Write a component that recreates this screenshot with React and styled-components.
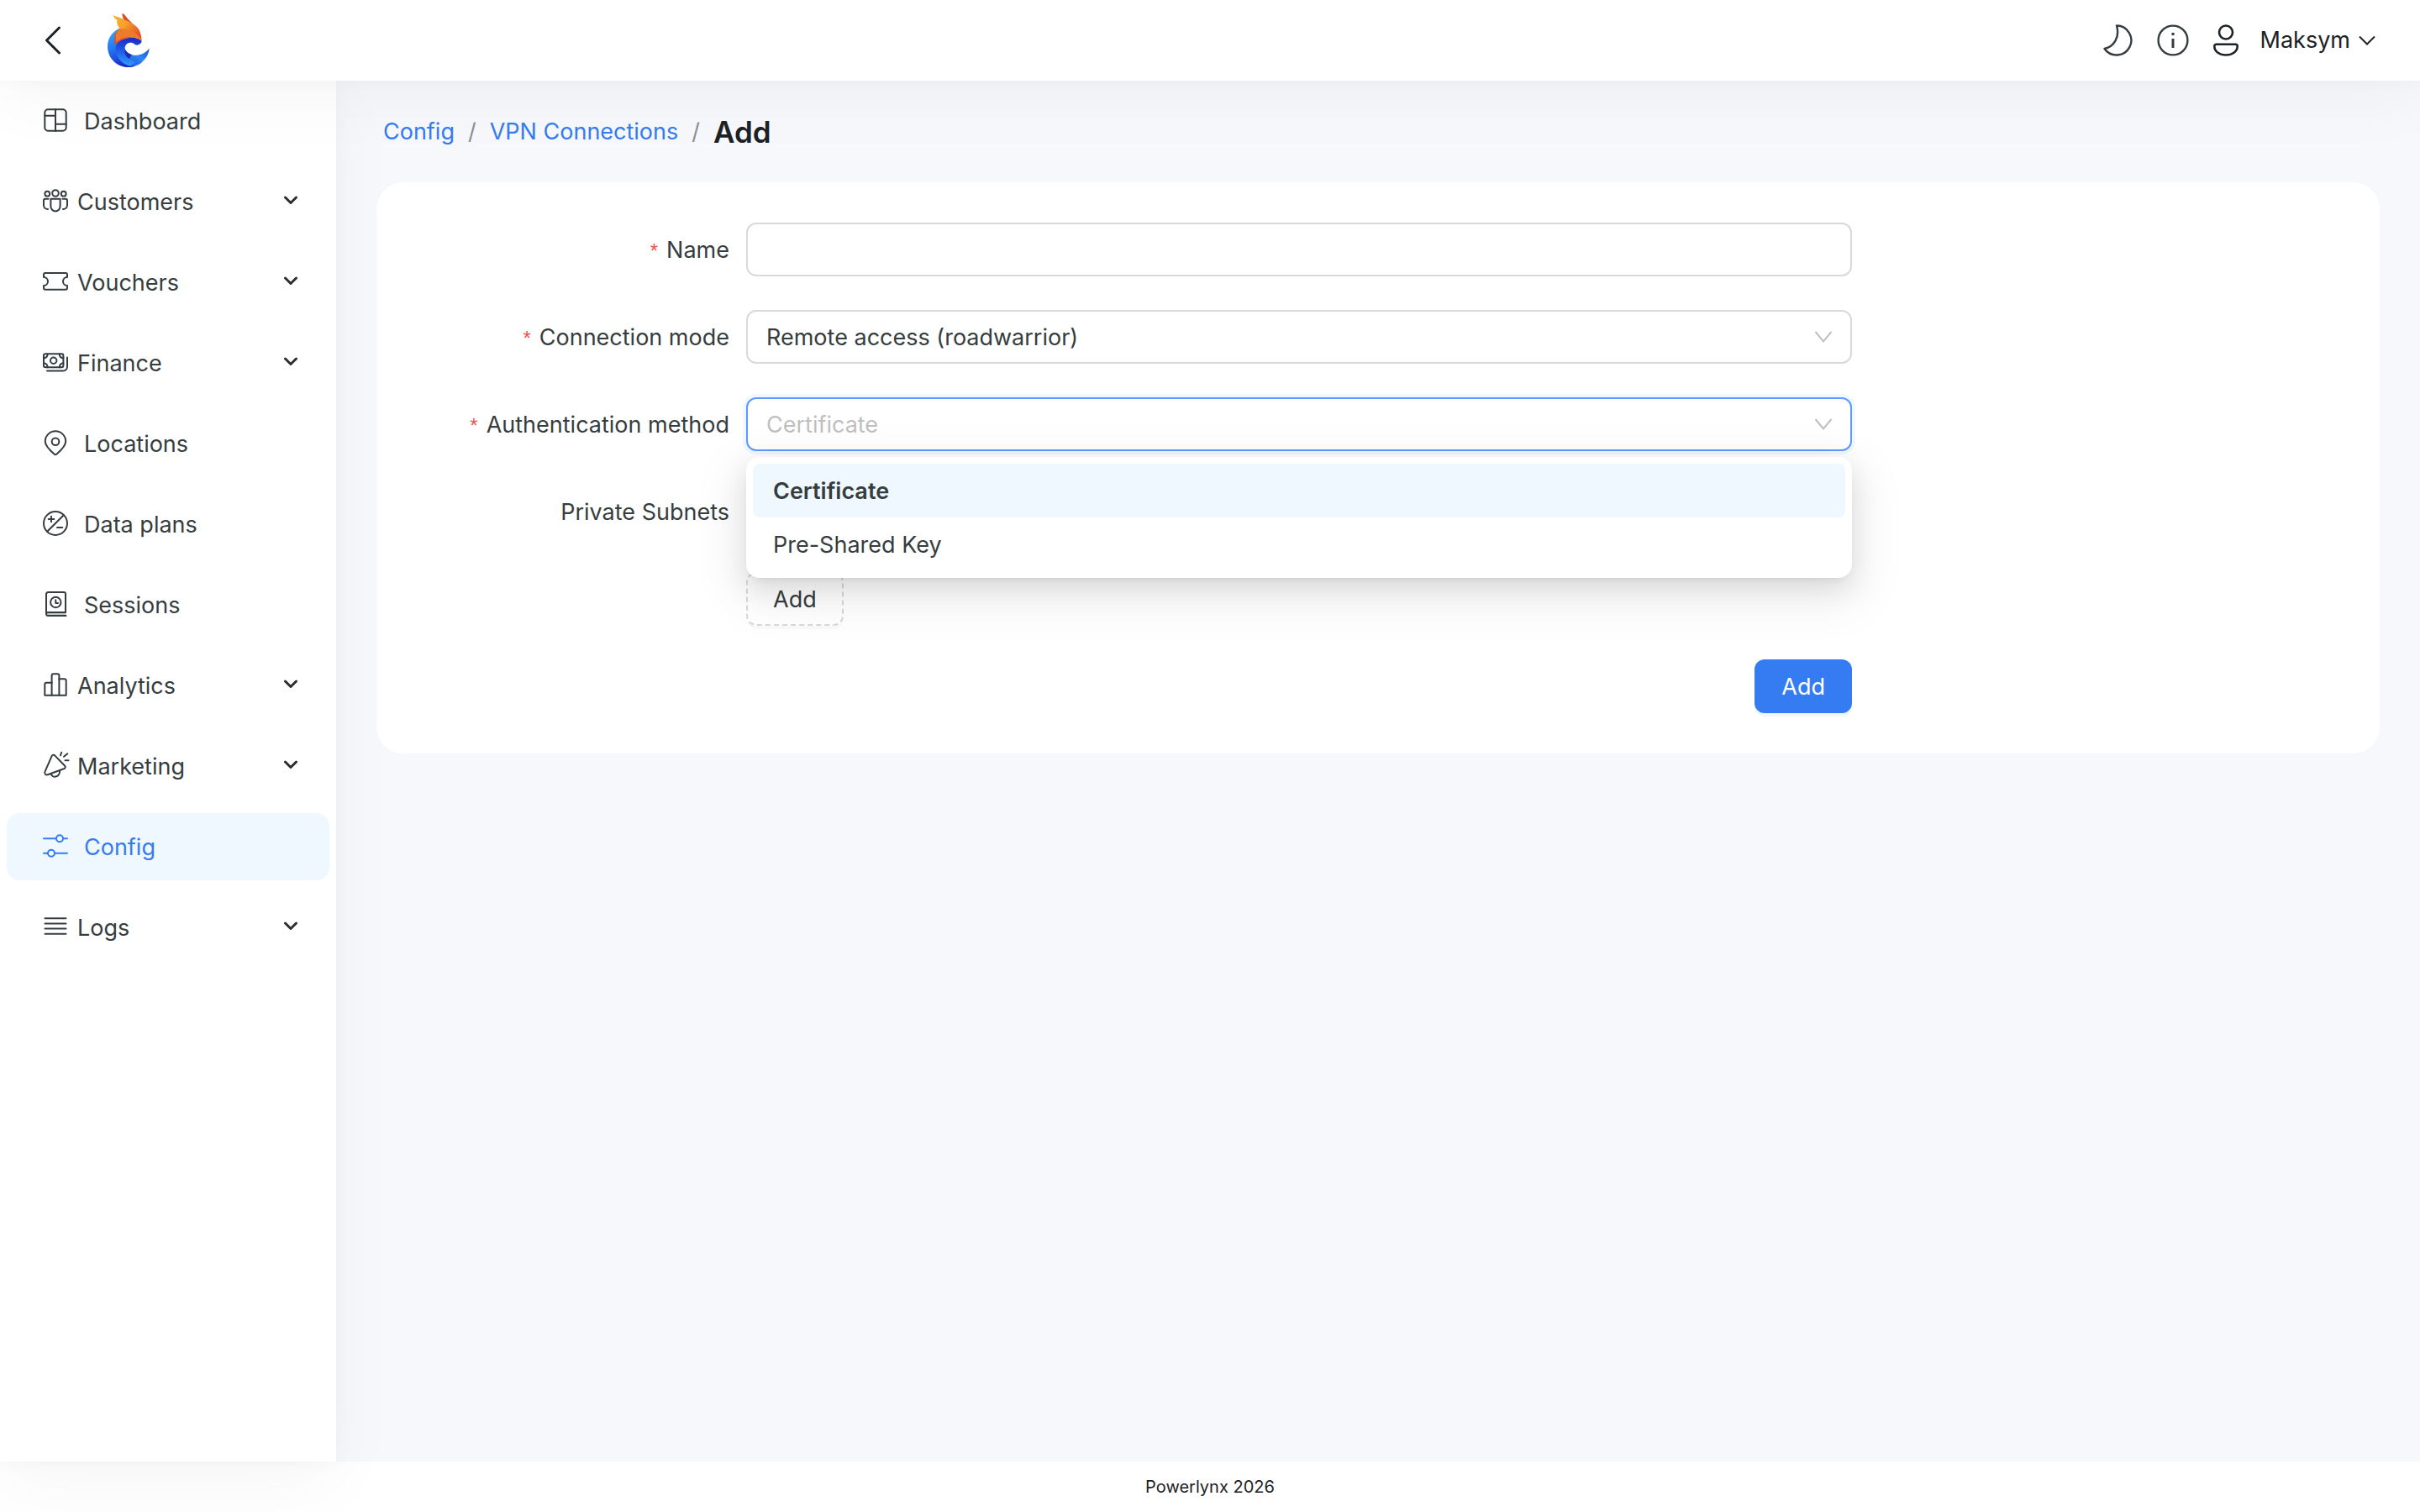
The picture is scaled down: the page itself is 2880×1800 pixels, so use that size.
import React, { useState } from 'react';
import styled, { createGlobalStyle, css } from 'styled-components';

const GlobalStyle = createGlobalStyle`
  * {
    box-sizing: border-box;
  }
  body {
    margin: 0;
    font-family: Inter, "Liberation Sans", sans-serif;
    font-size: 27px;
    line-height: 44px;
    color: #363d40;
    background: #ffffff;
  }
  button, input, select {
    font: inherit;
    color: inherit;
  }
`

const panelShadow = '0 0 20px rgba(0, 0, 0, 0.03), 0 24px 80px rgba(0, 0, 0, 0.04)'

const Page = styled.div`
  display: flex;
  flex-direction: column;
  min-height: 100vh;
`
const Header = styled.header`
  position: relative;
  z-index: 2;
  display: flex;
  align-items: center;
  justify-content: space-between;
  height: 96px;
  padding: 0 52px 0 50px;
  background: #ffffff;
  box-shadow: ${panelShadow};
`
const HeaderGroup = styled.div`
  display: flex;
  align-items: center;
  gap: ${props => props.$gap}px;
`
const IconButton = styled.button`
  display: flex;
  align-items: center;
  padding: 0;
  border: 0;
  background: none;
  color: ${props => props.$dark ? '#1d2226' : '#363d40'};
`
const UserButton = styled(IconButton)`
  gap: 9px;
`
const UserIcon = styled.svg`
  margin-right: 16px;
`
const Body = styled.div`
  display: flex;
  flex: 1;
`
const Sidebar = styled.nav`
  position: relative;
  z-index: 1;
  flex: 0 0 400px;
  background: #ffffff;
  box-shadow: ${panelShadow};
`
const Menu = styled.ul`
  margin: 0;
  padding: 0;
  list-style: none;
`
const itemStyle = css`
  display: flex;
  align-items: center;
  width: 384px;
  height: 80px;
  margin: 8px;
  padding: 2px 38px 0 43px;
  border: 0;
  border-radius: 16px;
  text-align: left;
  text-decoration: none;
`
const MenuLink = styled.a`
  ${itemStyle}
  gap: 19px;
  color: ${props => props.$active ? '#357cf3' : '#363d40'};
  background: ${props => props.$active ? '#eff7ff' : 'none'};
`
const MenuButton = styled.button`
  ${itemStyle}
  gap: 11px;
  background: none;
`
const MenuRow = styled.li`
  display: flow-root;
  height: 96px;
`
const MenuText = styled.span`
  flex: 1;
`
const MenuIcon = styled.svg`
  flex: none;
  width: 30px;
  height: 34px;
  padding-bottom: 4px;
  overflow: visible;
`
const Content = styled.main`
  flex: 1;
  min-width: 0;
  padding: 0 48px;
  background: #f6f8fc;
`
const Breadcrumb = styled.nav`
  display: flex;
  align-items: center;
  gap: 16px;
  padding: 37px 8px 36px;
  line-height: 48px;
`
const CrumbLink = styled.a`
  color: #357cf3;
  text-decoration: none;
`
const CrumbSeparator = styled.span`
  color: #8d8f93;
`
const CrumbTitle = styled.h1`
  margin: 0;
  font-size: 35px;
  font-weight: 600;
  color: #1d2226;
`
const Card = styled.form`
  display: flex;
  flex-direction: column;
  gap: 40px;
  padding: 48px;
  border-radius: 32px;
  background: #ffffff;
`
const FormRow = styled.div`
  display: grid;
  grid-template-columns: 98fr 329fr 145fr;
  align-items: center;
`
const Label = styled.label`
  padding: 2px 20px 0 0;
  text-align: right;
`
const Required = styled.span`
  margin-right: 10px;
  font-family: "Liberation Sans", sans-serif;
  font-size: 24px;
  color: #ef5350;
`
const Control = styled.div`
  position: relative;
  grid-column: 2;
  display: flex;
  justify-content: ${props => props.$end ? 'flex-end' : 'flex-start'};
`
const fieldStyle = css`
  width: 100%;
  height: 64px;
  padding: 2px 22px 0;
  border: 2px solid #d9d9d9;
  border-radius: 12px;
  outline: none;
  background: #ffffff;
`
const Input = styled.input`
  ${fieldStyle}
`
const Select = styled.select`
  ${fieldStyle}
  appearance: none;
  ${props => props.$open && css`
    border-color: #5b9bff;
    box-shadow: 0 0 0 4px #eff7ff;
    color: #bfbfbf;
  `}
`
const SelectArrow = styled.svg`
  position: absolute;
  top: 20px;
  right: 22px;
  pointer-events: none;
`
const Dropdown = styled.ul`
  position: absolute;
  z-index: 1;
  top: 100%;
  left: 0;
  right: 0;
  margin: 7px 0 0;
  padding: 8px;
  border-radius: 16px;
  list-style: none;
  background: #ffffff;
  box-shadow:
    0 12px 32px rgba(0, 0, 0, 0.1),
    0 6px 12px -8px rgba(0, 0, 0, 0.14),
    0 18px 56px 16px rgba(0, 0, 0, 0.06);
`
const Option = styled.li`
  padding: 2px 24px 0;
  border-radius: 8px;
  line-height: 62px;
  font-weight: ${props => props.$selected ? 600 : 400};
  background: ${props => props.$selected ? '#eff7ff' : 'none'};
`
const Button = styled.button`
  height: 64px;
  padding: 2px 30px 0;
  border: 2px solid #357cf3;
  border-radius: 12px;
  color: #ffffff;
  background: #357cf3;
  box-shadow: 0 4px 0 #eff7ff;
`
const DashedButton = styled(Button)`
  border: 2px dashed #d9d9d9;
  color: #363d40;
  background: #ffffff;
  box-shadow: 0 4px 0 rgba(0, 0, 0, 0.02);
`
const Footer = styled.footer`
  font-size: 20px;
  line-height: 60px;
  text-align: center;
  color: #1d2226;
`

const icons = {
  dashboard: (
    <>
      <rect x="2.3" y="2.3" width="25.4" height="25.4" rx="4" />
      <path d="M15 2.3v25.4M2.3 9.7H15M15 19.7h12.7" />
    </>
  ),
  customers: (
    <>
      <circle cx="15" cy="6" r="3.8" />
      <circle cx="5.3" cy="6.7" r="2.9" />
      <circle cx="24.7" cy="6.7" r="2.9" />
      <path d="M9.4 12.8h11.2v9a5.6 5.6 0 0 1-11.2 0z" />
      <path d="M6.6 12.7H3a2 2 0 0 0-2 2v5.8a4.8 4.8 0 0 0 5 4.5M23.4 12.7H27a2 2 0 0 1 2 2v5.8a4.8 4.8 0 0 1-5 4.5" />
    </>
  ),
  vouchers: (
    <path d="M1 7a2 2 0 0 1 2-2h24a2 2 0 0 1 2 2v3a5 5 0 0 0 0 10v2.700a2 2 0 0 1-2 2H3a2 2 0 0 1-2-2V20a5 5 0 0 0 0-10z" />
  ),
  finance: (
    <>
      <rect x="1" y="5.300" width="23.400" height="16" rx="2" />
      <circle cx="12.700" cy="13.300" r="3.700" />
      <path d="M1 10.500a4.500 4.500 0 0 0 4.500-5M24.400 10.500a4.500 4.500 0 0 1-4.500-5M1 16.300a4.500 4.500 0 0 1 4.500 5M24.400 16.300a4.500 4.500 0 0 0-4.500 5" />
      <path d="M29 9.500v11a5 5 0 0 1-5 5H5" />
    </>
  ),
  locations: (
    <>
      <path d="M27.200 13.500c0 6-6.700 11.500-10.800 15a2 2 0 0 1-2.800 0C9.500 25 2.800 19.500 2.800 13.500a12.200 12.200 0 0 1 24.400 0z" />
      <circle cx="15" cy="13.700" r="4.300" />
    </>
  ),
  plans: (
    <>
      <circle cx="15" cy="15" r="14" />
      <path d="M5.200 24.800L24.800 5.200M6.700 10h6.600M10 6.700v6.600M17 20h6.300" />
    </>
  ),
  sessions: (
    <>
      <path d="M4 25h23.500v4H6z" fill="#c4c6c7" stroke="none" />
      <path d="M27.500 29H6.500A2.500 2.500 0 0 1 4 26.500V3.500A2.500 2.500 0 0 1 6.500 1H25a2 2 0 0 1 2 2v22H6a2 2 0 0 0-2 2" />
      <circle cx="15.300" cy="13" r="6.200" />
      <path d="M15.300 10.300V14H18" />
    </>
  ),
  analytics: (
    <>
      <path d="M10.600 12.700H4.300a2 2 0 0 0-2 2v13h8.300M19.400 8.300h6.300a2 2 0 0 1 2 2v17.400h-8.300" />
      <path d="M10.600 27.700V4.300a2 2 0 0 1 2-2h4.800a2 2 0 0 1 2 2v23.400z" />
    </>
  ),
  marketing: (
    <>
      <path d="M10.600 4.100a2.200 2.200 0 0 1 3.600-.7l12 12.400a2 2 0 0 1-.7 3.200L5.800 26.200a2.600 2.600 0 0 1-3.300-3.600z" />
      <path d="M9.700 25c.8 5.400 10.200 5.400 10.600-3.800M22.200-.2l-1.200 3.500M29.300 1.200L25 4.800M26.500 9.300h4" />
    </>
  ),
  config: (
    <>
      <path d="M1 6.300h15M24 6.300h5M1 23.700h5M14 23.700h15" />
      <circle cx="20" cy="6.300" r="4" />
      <circle cx="10" cy="23.700" r="4" />
    </>
  ),
  logs: <path d="M2.500 5.300h25M2.500 11.500h25M2.500 17.500h25M2.500 23.700h25" />,
}

const menu = [
  { text: 'Dashboard', icon: 'dashboard' },
  { text: 'Customers', icon: 'customers', group: true },
  { text: 'Vouchers', icon: 'vouchers', group: true },
  { text: 'Finance', icon: 'finance', group: true },
  { text: 'Locations', icon: 'locations' },
  { text: 'Data plans', icon: 'plans' },
  { text: 'Sessions', icon: 'sessions' },
  { text: 'Analytics', icon: 'analytics', group: true },
  { text: 'Marketing', icon: 'marketing', group: true },
  { text: 'Config', icon: 'config', active: true },
  { text: 'Logs', icon: 'logs', group: true },
]

const Icon = ({ name }) => (
  <MenuIcon viewBox="0 0 30 30" fill="none" stroke="currentColor" strokeWidth="2" strokeLinecap="round" strokeLinejoin="round" aria-hidden="true">
    {icons[name]}
  </MenuIcon>
)

const MenuChevron = () => (
  <svg width="16" height="18" viewBox="0 0 16 18" fill="none" stroke="#282f33" strokeWidth="3" strokeLinecap="round" strokeLinejoin="round" aria-hidden="true">
    <path d="M1.500 3L8 9.500L14.500 3" />
  </svg>
)

const Logo = () => (
  <svg width="50" height="64" viewBox="384 48 150 192" role="img" aria-label="Powerlynx">
    <defs>
      <linearGradient id="back" x1="0.200" y1="0" x2="0.500" y2="1">
        <stop offset="0" stopColor="#37a8fb" />
        <stop offset="0.500" stopColor="#2473ee" />
        <stop offset="1" stopColor="#1a22c8" />
      </linearGradient>
      <linearGradient id="wave" x1="0.600" y1="0" x2="0.500" y2="1">
        <stop offset="0" stopColor="#1b28c6" />
        <stop offset="0.450" stopColor="#1f55e6" />
        <stop offset="1" stopColor="#2f9dfa" />
      </linearGradient>
      <linearGradient id="tip" x1="1" y1="0" x2="0" y2="1">
        <stop offset="0" stopColor="#1d4fd8" />
        <stop offset="0.450" stopColor="#2f86f2" />
        <stop offset="1" stopColor="#1e4be0" />
      </linearGradient>
      <linearGradient id="ear" x1="0" y1="0" x2="1" y2="0.700">
        <stop offset="0" stopColor="#fdb52c" />
        <stop offset="0.450" stopColor="#f7a02b" />
        <stop offset="1" stopColor="#e2512c" />
      </linearGradient>
    </defs>
    <path fill="url(#back)" d="M430 100C400 112 384 138 384 166C384 208 417 240 458 240C476 240 494 233 506 223L484 206L446 190L440 140z" />
    <path fill="url(#wave)" d="M506 147C492 128 436 128 415 160C407 190 425 225 462 236C482 238 500 230 510 218L484 200C460 196 446 184 446 172C446 160 456 152 466 152C478 152 480 160 490 161C498 160 505 154 506 147z" />
    <path fill="url(#tip)" d="M533 172C531 206 505 234 462 236C480 229 488 222 470 214C455 206 450 200 447 180C456 194 474 199 490 197C508 196 524 186 533 172z" />
    <path fill="#1a2fae" d="M446 174C443 188 448 203 462 210L470 195C458 191 449 184 446 174z" />
    <path fill="#1a22c8" d="M418 226C436 236 455 238 484 235C468 242 437 243 418 226z" />
    <path fill="#dc4b2d" d="M428 102C410 112 403 135 413 161C425 143 455 132 480 135L470 110z" />
    <path fill="#ed7b2b" d="M429 102C414 112 409 130 416 150C436 130 480 126 506 146C506 134 502 118 495 106L470 98z" />
    <path fill="#df4a2c" d="M437 48C441 47 448 56 455 66L492 103L440 76C444 68 433 56 437 48z" />
    <path fill="url(#ear)" d="M405 53C412 60 430 61 441 69C460 76 488 90 496 106C501 116 504 130 505 143C496 122 466 105 429 102C421 95 416 82 418 72C411 67 404 60 405 53z" />
  </svg>
)

const Arrow = () => (
  <SelectArrow width="24" height="24" viewBox="0 0 24 24" fill="none" stroke="#c0c0c0" strokeWidth="2" aria-hidden="true">
    <path d="M2.500 6L12 17.500L21.500 6" />
  </SelectArrow>
)

const TopBar = () => (
  <Header>
    <HeaderGroup $gap={53}>
      <IconButton type="button" $dark aria-label="Back">
        <svg width="25" height="34" viewBox="0 0 25 34" fill="none" stroke="currentColor" strokeWidth="3" strokeLinecap="round" strokeLinejoin="round">
          <path d="M20.500 2L5.500 17L20.500 32" />
        </svg>
      </IconButton>
      <Logo />
    </HeaderGroup>
    <HeaderGroup $gap={28}>
      <IconButton type="button" aria-label="Dark theme">
        <svg width="36" height="38" viewBox="0 0 36 38" fill="none" stroke="currentColor" strokeWidth="2.400" strokeLinejoin="round">
          <path d="M16 1.500A17.500 17.500 0 1 1 1.500 29C13 26.500 20 15 16 1.500z" />
        </svg>
      </IconButton>
      <IconButton type="button" aria-label="Information">
        <svg width="38" height="38" viewBox="0 0 38 38" fill="none" stroke="currentColor" strokeWidth="2.400">
          <circle cx="19" cy="19" r="17.400" />
          <path d="M19 17v11" strokeWidth="3" />
          <circle cx="19" cy="11.500" r="1.800" fill="currentColor" stroke="none" />
        </svg>
      </IconButton>
      <UserButton type="button" $dark>
        <UserIcon width="32" height="38" viewBox="0 0 32 38" fill="none" stroke="currentColor" strokeWidth="2.600" strokeLinejoin="round">
          <circle cx="16" cy="9.500" r="8" />
          <path d="M4.500 23.800h23a2.200 2.200 0 0 1 2.200 2.200c0 6.500-6.500 10.500-13.700 10.500S2.300 32.500 2.300 26a2.200 2.200 0 0 1 2.200-2.200z" />
        </UserIcon>
        Maksym
        <svg width="22" height="14" viewBox="0 0 22 14" fill="none" stroke="currentColor" strokeWidth="2" aria-hidden="true">
          <path d="M2 2.500L11 11.500L20 2.500" />
        </svg>
      </UserButton>
    </HeaderGroup>
  </Header>
)

const SideMenu = () => (
  <Sidebar aria-label="Main">
    <Menu>
      {menu.map(item => (
        <MenuRow key={item.text}>
          {item.group ? (
            <MenuButton type="button">
              <Icon name={item.icon} />
              <MenuText>{item.text}</MenuText>
              <MenuChevron />
            </MenuButton>
          ) : (
            <MenuLink href="#" $active={item.active}>
              <Icon name={item.icon} />
              <MenuText>{item.text}</MenuText>
            </MenuLink>
          )}
        </MenuRow>
      ))}
    </Menu>
  </Sidebar>
)

const VpnForm = () => {
  const [method, setMethod] = useState('Certificate')
  const methods = ['Certificate', 'Pre-Shared Key']

  return (
    <Card onSubmit={e => e.preventDefault()}>
      <FormRow>
        <Label htmlFor="name"><Required>*</Required>Name</Label>
        <Control>
          <Input id="name" type="text" />
        </Control>
      </FormRow>
      <FormRow>
        <Label htmlFor="mode"><Required>*</Required>Connection mode</Label>
        <Control>
          <Select id="mode">
            <option>Remote access (roadwarrior)</option>
          </Select>
          <Arrow />
        </Control>
      </FormRow>
      <FormRow>
        <Label htmlFor="method"><Required>*</Required>Authentication method</Label>
        <Control>
          <Select id="method" $open value={method} onChange={e => setMethod(e.target.value)}>
            {methods.map(name => <option key={name}>{name}</option>)}
          </Select>
          <Arrow />
          <Dropdown role="listbox" aria-label="Authentication method">
            {methods.map(name => (
              <Option key={name} role="option" aria-selected={name === method} $selected={name === method} onClick={() => setMethod(name)}>
                {name}
              </Option>
            ))}
          </Dropdown>
        </Control>
      </FormRow>
      <FormRow>
        <Label htmlFor="subnets">Private Subnets</Label>
        <Control>
          <Input id="subnets" type="text" />
        </Control>
      </FormRow>
      <FormRow>
        <Control>
          <DashedButton type="button">Add</DashedButton>
        </Control>
      </FormRow>
      <FormRow>
        <Control $end>
          <Button type="submit">Add</Button>
        </Control>
      </FormRow>
    </Card>
  )
}

const App = () => (
  <Page>
    <GlobalStyle />
    <TopBar />
    <Body>
      <SideMenu />
      <Content>
        <Breadcrumb aria-label="Breadcrumb">
          <CrumbLink href="#">Config</CrumbLink>
          <CrumbSeparator>/</CrumbSeparator>
          <CrumbLink href="#">VPN Connections</CrumbLink>
          <CrumbSeparator>/</CrumbSeparator>
          <CrumbTitle>Add</CrumbTitle>
        </Breadcrumb>
        <VpnForm />
      </Content>
    </Body>
    <Footer>Powerlynx 2026</Footer>
  </Page>
)

export default App;
